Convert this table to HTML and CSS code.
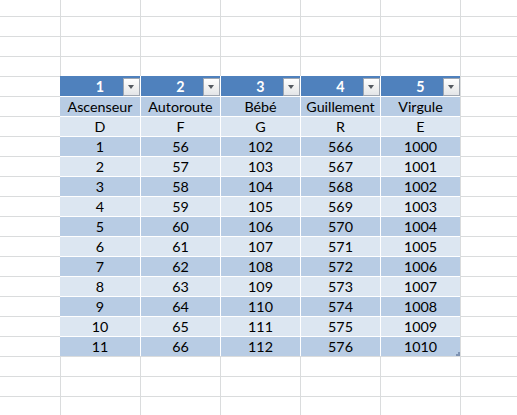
FILE: index.html
```html
<!DOCTYPE html>
<html>
<head>
<meta charset="utf-8">
<link rel="stylesheet" href="styles.css">
</head>
<body>
<div class="sheet">
  <div class="table">
    <div class="row head">
      <div class="cell">1<span class="dd"></span></div>
      <div class="cell">2<span class="dd"></span></div>
      <div class="cell">3<span class="dd"></span></div>
      <div class="cell">4<span class="dd"></span></div>
      <div class="cell">5<span class="dd"></span></div>
    </div>
    <div class="row dark"><div class="cell">Ascenseur</div><div class="cell">Autoroute</div><div class="cell">Bébé</div><div class="cell">Guillement</div><div class="cell">Virgule</div></div>
    <div class="row light"><div class="cell">D</div><div class="cell">F</div><div class="cell">G</div><div class="cell">R</div><div class="cell">E</div></div>
    <div class="row dark"><div class="cell">1</div><div class="cell">56</div><div class="cell">102</div><div class="cell">566</div><div class="cell">1000</div></div>
    <div class="row light"><div class="cell">2</div><div class="cell">57</div><div class="cell">103</div><div class="cell">567</div><div class="cell">1001</div></div>
    <div class="row dark"><div class="cell">3</div><div class="cell">58</div><div class="cell">104</div><div class="cell">568</div><div class="cell">1002</div></div>
    <div class="row light"><div class="cell">4</div><div class="cell">59</div><div class="cell">105</div><div class="cell">569</div><div class="cell">1003</div></div>
    <div class="row dark"><div class="cell">5</div><div class="cell">60</div><div class="cell">106</div><div class="cell">570</div><div class="cell">1004</div></div>
    <div class="row light"><div class="cell">6</div><div class="cell">61</div><div class="cell">107</div><div class="cell">571</div><div class="cell">1005</div></div>
    <div class="row dark"><div class="cell">7</div><div class="cell">62</div><div class="cell">108</div><div class="cell">572</div><div class="cell">1006</div></div>
    <div class="row light"><div class="cell">8</div><div class="cell">63</div><div class="cell">109</div><div class="cell">573</div><div class="cell">1007</div></div>
    <div class="row dark"><div class="cell">9</div><div class="cell">64</div><div class="cell">110</div><div class="cell">574</div><div class="cell">1008</div></div>
    <div class="row light"><div class="cell">10</div><div class="cell">65</div><div class="cell">111</div><div class="cell">575</div><div class="cell">1009</div></div>
    <div class="row dark"><div class="cell">11</div><div class="cell">66</div><div class="cell">112</div><div class="cell">576</div><div class="cell last">1010<span class="grip"></span></div></div>
  </div>
</div>
</body>
</html>
```

FILE: styles.css
```css
html, body {
  margin: 0;
  padding: 0;
  background: #ffffff;
}

.sheet {
  width: 517px;
  height: 415px;
  box-sizing: border-box;
  padding: 76px 0 0 60px;
  overflow: hidden;
  background-color: #ffffff;
  background-image:
    linear-gradient(to bottom, #dadcdd 0, #dadcdd 1px, transparent 1px),
    linear-gradient(to right, #dadcdd 0, #dadcdd 1px, transparent 1px);
  background-size: 100% 20px, 80px 100%;
  background-position: 0 16px, 60px 0;
  font-family: "Lato", "Liberation Sans", sans-serif;
  font-size: 14.3px;
  color: #000000;
}

.table {
  width: 400px;
  display: flex;
  flex-direction: column;
}

.row {
  display: flex;
  height: 20px;
  box-sizing: border-box;
}

.row + .row {
  border-top: 1px solid #ffffff;
}

.cell {
  position: relative;
  width: 80px;
  box-sizing: border-box;
  display: flex;
  align-items: flex-end;
  justify-content: center;
  padding-bottom: 1px;
  line-height: 17px;
}

.cell + .cell {
  border-left: 1px solid #ffffff;
}

.head {
  background: #4f81bd;
  color: #ffffff;
  font-weight: bold;
}

.dark {
  background: #b8cce4;
}

.light {
  background: #dce6f1;
}

.dd {
  position: absolute;
  right: 0;
  top: 2px;
  width: 17px;
  height: 18px;
  box-sizing: border-box;
  border: 1px solid #9fa7b2;
  background: linear-gradient(to bottom, #ffffff 0%, #f2f2f2 50%, #e3e5e8 100%);
}

.dd::after {
  content: "";
  position: absolute;
  left: 4px;
  top: 6px;
  border-left: 3.5px solid transparent;
  border-right: 3.5px solid transparent;
  border-top: 4px solid #555a60;
}

.grip {
  position: absolute;
  right: 0;
  bottom: 0;
  width: 4px;
  height: 4px;
  background:
    linear-gradient(#7e93b3, #7e93b3) right bottom / 4px 2px no-repeat,
    linear-gradient(#7e93b3, #7e93b3) right bottom / 2px 4px no-repeat;
}
```
